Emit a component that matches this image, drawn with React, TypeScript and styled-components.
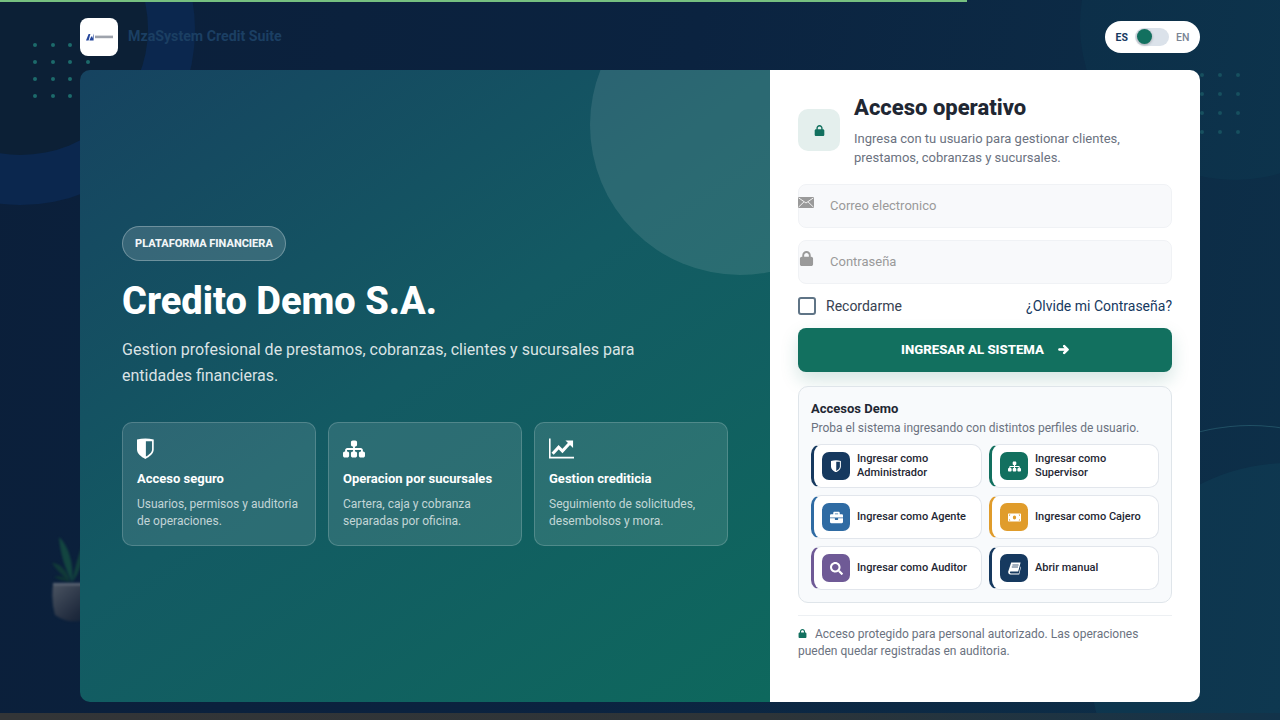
import type { ComponentType } from "react";
import styled, { createGlobalStyle } from "styled-components";
import { FaBriefcase, FaMoneyBill, FaSearch } from "react-icons/fa";
import { FaArrowRight, FaLock, FaSitemap } from "react-icons/fa6";

const GlobalStyle = createGlobalStyle`
  * { box-sizing: border-box; }
  html, body { margin: 0; height: 100%; }
  body {
    font-family: "Roboto", "Liberation Sans", sans-serif;
    background: #0b1f3a;
    overflow: hidden;
  }
`;

const ShieldIcon = () => (
  <svg width="0.76em" height="0.95em" viewBox="0 0 16 20" aria-hidden="true">
    <path
      fill="currentColor"
      fillRule="evenodd"
      d="M0 1.5 Q8 -0.5 16 1.5 V11 C16 15 12 18 8 20 C4 18 0 15 0 11Z M8.5 3 V17.8 C11.5 16 14.2 14 14.4 11 V3Z"
    />
  </svg>
);

const ChartIcon = () => (
  <svg width="1.14em" height="0.95em" viewBox="0 0 25 20" aria-hidden="true">
    <path fill="currentColor" d="M0 0 H1.6 V18.4 H25 V20 H0Z" />
    <path fill="none" stroke="currentColor" strokeWidth="3" d="M3.6 15.4 L9.6 8.8 L13.4 12.6 L21 4.4" />
    <path fill="currentColor" d="M16.4 2 H24 V9.6Z" />
  </svg>
);

const BookIcon = () => (
  <svg width="1em" height="1em" viewBox="0 0 13 13" aria-hidden="true">
    <path
      fill="currentColor"
      d="M3.2 0.5 H12.6 L10.2 9.4 H2.6 C1.6 9.4 1.6 11.4 2.8 11.4 H10.8 L12.6 4.5 L13 5 L11.2 12.5 H2.4 C0.6 12.5 -0.2 10.6 0.4 9Z"
    />
    <path stroke="#16395f" strokeWidth="0.8" d="M4.4 3 H10.6 M3.8 5 H10" />
  </svg>
);

const features: { icon: ComponentType; title: string; lines: string[] }[] = [
  { icon: ShieldIcon, title: "Acceso seguro", lines: ["Usuarios, permisos y auditoria", "de operaciones."] },
  { icon: FaSitemap, title: "Operacion por sucursales", lines: ["Cartera, caja y cobranza", "separadas por oficina."] },
  { icon: ChartIcon, title: "Gestion crediticia", lines: ["Seguimiento de solicitudes,", "desembolsos y mora."] },
];

const demos: { icon: ComponentType; color: string; lines: string[] }[] = [
  { icon: ShieldIcon, color: "#16395f", lines: ["Ingresar como", "Administrador"] },
  { icon: FaSitemap, color: "#12705f", lines: ["Ingresar como", "Supervisor"] },
  { icon: FaBriefcase, color: "#2f6ba3", lines: ["Ingresar como Agente"] },
  { icon: FaMoneyBill, color: "#e09c2b", lines: ["Ingresar como Cajero"] },
  { icon: FaSearch, color: "#6f5a96", lines: ["Ingresar como Auditor"] },
  { icon: BookIcon, color: "#16395f", lines: ["Abrir manual"] },
];

const App = () => {
  return (
    <>
      <GlobalStyle />
      <Page>
        <CircleBlue />
        <CircleDark />
        <CircleRight />
        <CurveRight />
        <SwellRight />
        <DotsLeft>
          {Array.from({ length: 16 }).map((_, i) => (
            <Dot key={i} />
          ))}
        </DotsLeft>
        <DotsRight>
          {Array.from({ length: 16 }).map((_, i) => (
            <Dot key={i} />
          ))}
        </DotsRight>
        <Plant viewBox="0 0 60 90" aria-hidden="true">
          <defs>
            <linearGradient id="pot" x1="0" y1="0" x2="1" y2="1">
              <stop offset="0" stopColor="#4a5361" />
              <stop offset="0.7" stopColor="#1f2a3d" />
              <stop offset="1" stopColor="#0f1f35" />
            </linearGradient>
          </defs>
          <path d="M18 47 C10 40 4 34 0 28 C8 28 16 36 18 47Z" fill="#113a38" />
          <path d="M18 47 C12 46 6 44 2 42 C8 40 14 42 18 47Z" fill="#0f3534" />
          <path d="M20 47 C12 32 8 16 7 2 C16 10 22 28 20 47Z" fill="#134540" />
          <path d="M20 47 C22 36 26 22 30 10 C32 24 28 38 20 47Z" fill="#12403d" />
          <path d="M1 50 H40 V82 Q20 92 3 80 Q-1 66 1 50Z" fill="url(#pot)" />
          <rect x="1" y="48" width="39" height="2.5" fill="#5b6473" />
        </Plant>

        <ProgressBar />

        <Header>
          <Brand>
            <LogoBox>
              <svg width="27" height="8" viewBox="0 0 27 8" aria-hidden="true">
                <path d="M0 7.5 L2.6 1 H4.4 L2.6 7.5Z" fill="#24469c" />
                <path d="M3.4 7.5 L5.4 3 L6.4 5 L7.6 0.5 V7.5Z" fill="#24469c" />
                <rect x="9" y="2.6" width="18" height="2.6" fill="#5d6675" opacity="0.6" />
              </svg>
            </LogoBox>
            <BrandName>MzaSystem Credit Suite</BrandName>
          </Brand>
          <LangPill>
            <LangLabel $active>ES</LangLabel>
            <Track>
              <Knob />
            </Track>
            <LangLabel>EN</LangLabel>
          </LangPill>
        </Header>

        <Shell>
          <Hero>
            <HeroCircle />
            <Badge>PLATAFORMA FINANCIERA</Badge>
            <HeroTitle>Credito Demo S.A.</HeroTitle>
            <HeroText>
              Gestion profesional de prestamos, cobranzas, clientes y sucursales para
              <br />
              entidades financieras.
            </HeroText>
            <FeatureGrid>
              {features.map((f) => (
                <FeatureCard key={f.title}>
                  <FeatureIcon>
                    <f.icon />
                  </FeatureIcon>
                  <FeatureTitle>{f.title}</FeatureTitle>
                  <FeatureText>
                    {f.lines[0]}
                    <br />
                    {f.lines[1]}
                  </FeatureText>
                </FeatureCard>
              ))}
            </FeatureGrid>
          </Hero>

          <LoginPanel>
            <LoginHead>
              <LockBox>
                <FaLock />
              </LockBox>
              <div>
                <LoginTitle>Acceso operativo</LoginTitle>
                <LoginSub>
                  Ingresa con tu usuario para gestionar clientes,
                  <br />
                  prestamos, cobranzas y sucursales.
                </LoginSub>
              </div>
            </LoginHead>

            <Field>
              <FieldIcon $top={13}>
                <svg width="16" height="11" viewBox="0 0 16 11" aria-hidden="true">
                  <rect width="16" height="11" fill="#9a9a9a" />
                  <path d="M0.5 0.8 L8 6 L15.5 0.8 M0.5 10.2 L6 4.8 M15.5 10.2 L10 4.8" stroke="#f0f0f0" strokeWidth="1" fill="none" />
                </svg>
              </FieldIcon>
              <FieldInput placeholder="Correo electronico" />
            </Field>
            <Field>
              <FieldIcon $top={11}>
                <FaLock />
              </FieldIcon>
              <FieldInput placeholder="Contraseña" />
            </Field>

            <OptionsRow>
              <RememberLabel>
                <CheckBox />
                Recordarme
              </RememberLabel>
              <ForgotLink>¿Olvide mi Contraseña?</ForgotLink>
            </OptionsRow>

            <SubmitButton>
              INGRESAR AL SISTEMA
              <FaArrowRight />
            </SubmitButton>

            <DemoCard>
              <DemoTitle>Accesos Demo</DemoTitle>
              <DemoSub>Proba el sistema ingresando con distintos perfiles de usuario.</DemoSub>
              <DemoGrid>
                {demos.map((d) => (
                  <DemoButton key={d.lines.join(" ")} $color={d.color}>
                    <DemoIcon $color={d.color}>
                      <d.icon />
                    </DemoIcon>
                    <span>
                      {d.lines.map((line, i) => (
                        <DemoLine key={i}>{line}</DemoLine>
                      ))}
                    </span>
                  </DemoButton>
                ))}
              </DemoGrid>
            </DemoCard>

            <Notice>
              <NoticeLock>
                <FaLock />
              </NoticeLock>
              Acceso protegido para personal autorizado. Las operaciones
              <br />
              pueden quedar registradas en auditoria.
            </Notice>
          </LoginPanel>
        </Shell>
        <BottomStrip />
      </Page>
    </>
  );
};

export default App;

const Page = styled.div`
  position: relative;
  width: 1280px;
  height: 720px;
  overflow: hidden;
  background: linear-gradient(100deg, #0b1f3a 0%, #0b2340 50%, #0d3049 100%);
  display: flex;
  flex-direction: column;
`;

const ProgressBar = styled.div`
  position: absolute;
  top: 0;
  left: 0;
  width: 967px;
  height: 2px;
  background: #76c080;
`;

const CircleBlue = styled.div`
  position: absolute;
  left: -155px;
  top: -145px;
  width: 350px;
  height: 350px;
  border-radius: 50%;
  background: #0b274e;
`;

const CircleDark = styled.div`
  position: absolute;
  left: -107px;
  top: -97px;
  width: 255px;
  height: 252px;
  border-radius: 50%;
  background: #0c2036;
`;

const CircleRight = styled.div`
  position: absolute;
  right: -110px;
  top: -130px;
  width: 310px;
  height: 310px;
  border-radius: 50%;
  background: rgba(20, 90, 110, 0.12);
`;

const CurveRight = styled.div`
  position: absolute;
  left: 1050px;
  top: 425px;
  width: 400px;
  height: 400px;
  border-radius: 50%;
  border-top: 1px solid rgba(80, 160, 170, 0.3);
`;

const SwellRight = styled.div`
  position: absolute;
  left: 1090px;
  top: 463px;
  width: 400px;
  height: 400px;
  border-radius: 50%;
  background: rgba(20, 90, 110, 0.2);
`;

const DotsGrid = styled.div`
  position: absolute;
  display: grid;
  grid-template-columns: repeat(4, 4px);
  grid-auto-rows: 4px;
`;

const DotsLeft = styled(DotsGrid)`
  left: 33px;
  top: 43px;
  column-gap: 13.5px;
  row-gap: 13px;
  color: #1d6a6b;
`;

const DotsRight = styled(DotsGrid)`
  left: 1182px;
  top: 73px;
  column-gap: 14px;
  row-gap: 15px;
  color: #17505f;
`;

const Dot = styled.span`
  width: 4px;
  height: 4px;
  border-radius: 50%;
  background: currentColor;
`;

const Plant = styled.svg`
  position: absolute;
  left: 52px;
  top: 535px;
  width: 60px;
  height: 90px;
  filter: blur(0.8px);
`;

const Header = styled.header`
  position: relative;
  z-index: 2;
  height: 70px;
  padding: 18px 80px 0;
  display: flex;
  justify-content: space-between;
  align-items: flex-start;
`;

const Brand = styled.div`
  display: flex;
  align-items: center;
  gap: 10px;
`;

const LogoBox = styled.div`
  width: 38px;
  height: 38px;
  border-radius: 8px;
  background: #ffffff;
  display: flex;
  align-items: center;
  justify-content: center;
`;

const BrandName = styled.div`
  margin-bottom: 2px;
  font-size: 14.2px;
  font-weight: 700;
  color: #1b3f63;
`;

const LangPill = styled.div`
  margin-top: 3px;
  width: 95px;
  height: 32px;
  border-radius: 16px;
  background: #ffffff;
  display: flex;
  align-items: center;
  justify-content: center;
  gap: 7px;
`;

const LangLabel = styled.span<{ $active?: boolean }>`
  font-size: 10.5px;
  font-weight: ${(p) => (p.$active ? 700 : 500)};
  color: ${(p) => (p.$active ? "#16395f" : "#7a8594")};
`;

const Track = styled.div`
  position: relative;
  width: 34px;
  height: 18px;
  border-radius: 9px;
  background: #dbe2ea;
`;

const Knob = styled.div`
  position: absolute;
  left: 2px;
  top: 1px;
  width: 15px;
  height: 15px;
  border-radius: 50%;
  background: #12705f;
  box-shadow: 0 1px 3px rgba(0, 0, 0, 0.3);
`;

const Shell = styled.main`
  position: relative;
  z-index: 2;
  margin: 0 80px;
  width: 1120px;
  height: 632px;
  display: grid;
  grid-template-columns: 690px 430px;
  border-radius: 10px;
  overflow: hidden;
`;

const Hero = styled.section`
  position: relative;
  overflow: hidden;
  padding: 156px 42px 0;
  background: linear-gradient(145deg, #164360 0%, #135a63 48%, #0e685d 100%);
  color: #ffffff;
`;

const HeroCircle = styled.div`
  position: absolute;
  left: 510px;
  top: -95px;
  width: 300px;
  height: 300px;
  border-radius: 50%;
  background: rgba(255, 255, 255, 0.1);
`;

const Badge = styled.div`
  display: inline-flex;
  align-items: center;
  height: 35px;
  padding: 0 12px;
  border-radius: 18px;
  border: 1px solid rgba(255, 255, 255, 0.28);
  background: rgba(255, 255, 255, 0.15);
  font-size: 11px;
  font-weight: 800;
  color: #f1f5f7;
`;

const HeroTitle = styled.h1`
  margin: 18px 0 0;
  font-size: 38px;
  line-height: 44px;
  font-weight: 800;
`;

const HeroText = styled.p`
  position: relative;
  margin: 14px 0 0;
  font-size: 16px;
  line-height: 26px;
  color: rgba(255, 255, 255, 0.85);
`;

const FeatureGrid = styled.div`
  position: relative;
  margin-top: 33px;
  display: grid;
  grid-template-columns: repeat(3, 194px);
  gap: 12px;
`;

const FeatureCard = styled.div`
  height: 124px;
  padding: 15px 14px 0;
  border-radius: 10px;
  border: 1px solid rgba(255, 255, 255, 0.18);
  background: rgba(255, 255, 255, 0.11);
`;

const FeatureIcon = styled.div`
  height: 21px;
  font-size: 22px;
  color: #ffffff;
  display: flex;
  svg { display: block; }
`;

const FeatureTitle = styled.div`
  margin-top: 11px;
  font-size: 13px;
  line-height: 18px;
  font-weight: 700;
`;

const FeatureText = styled.div`
  margin-top: 8px;
  font-size: 12px;
  line-height: 17px;
  color: rgba(255, 255, 255, 0.72);
`;

const LoginPanel = styled.section`
  background: #ffffff;
  padding: 26px 28px 0;
`;

const LoginHead = styled.div`
  display: flex;
  align-items: center;
  gap: 14px;
  height: 72px;
  margin-bottom: 16px;
`;

const LockBox = styled.div`
  flex: none;
  width: 42px;
  height: 42px;
  margin-top: -4px;
  border-radius: 10px;
  background: #e4efed;
  color: #12705f;
  font-size: 11px;
  display: flex;
  align-items: center;
  justify-content: center;
`;

const LoginTitle = styled.h2`
  margin: -2px 0 0;
  font-size: 22px;
  line-height: 26px;
  font-weight: 800;
  color: #1f2733;
`;

const LoginSub = styled.p`
  margin: 8px 0 0;
  font-size: 13px;
  line-height: 19px;
  color: #6b7280;
`;

const Field = styled.div`
  position: relative;
  height: 44px;
  margin-bottom: 12px;
`;

const FieldIcon = styled.span<{ $top: number }>`
  position: absolute;
  left: 0;
  top: ${(p) => p.$top}px;
  width: 16px;
  color: #9a9a9a;
  font-size: 15px;
  line-height: 15px;
  text-align: center;
  svg { display: block; margin: 0 auto; }
`;

const FieldInput = styled.input`
  width: 100%;
  height: 100%;
  padding: 0 12px 2px 31px;
  border: 1px solid #f0f2f5;
  border-radius: 8px;
  background: #f8f9fb;
  font-family: inherit;
  font-size: 13px;
  outline: none;
  &::placeholder { color: #9a9a9a; opacity: 1; }
`;

const OptionsRow = styled.div`
  display: flex;
  justify-content: space-between;
  align-items: center;
  height: 32px;
  margin-top: -6px;
`;

const RememberLabel = styled.label`
  display: flex;
  align-items: center;
  gap: 10px;
  font-size: 14px;
  color: #374151;
`;

const CheckBox = styled.span`
  width: 18px;
  height: 18px;
  border: 2px solid #5f7486;
  border-radius: 3px;
  background: #ffffff;
`;

const ForgotLink = styled.a`
  font-size: 14px;
  color: #16395f;
`;

const SubmitButton = styled.button`
  width: 100%;
  height: 44px;
  margin-top: 6px;
  padding-bottom: 3px;
  border: 0;
  border-radius: 8px;
  background: #12705f;
  color: #ffffff;
  font-family: inherit;
  font-size: 13.2px;
  font-weight: 800;
  display: flex;
  align-items: center;
  justify-content: center;
  gap: 14px;
  box-shadow: 0 8px 18px rgba(18, 112, 95, 0.18);
  svg {
    font-size: 11px;
    stroke: currentColor;
    stroke-width: 50;
  }
`;

const DemoCard = styled.div`
  margin-top: 14px;
  height: 217px;
  padding: 14px 12px 0;
  border: 1px solid #dfe5ea;
  border-radius: 10px;
  background: #f8fafc;
`;

const DemoTitle = styled.div`
  font-size: 13px;
  line-height: 16px;
  font-weight: 700;
  color: #1f2733;
`;

const DemoSub = styled.div`
  margin-top: 3px;
  font-size: 12px;
  line-height: 16px;
  color: #6b7280;
`;

const DemoGrid = styled.div`
  margin-top: 8px;
  display: grid;
  grid-template-columns: 171px 170px;
  grid-auto-rows: 44px;
  gap: 7px;
`;

const DemoButton = styled.div<{ $color: string }>`
  display: flex;
  align-items: center;
  gap: 7px;
  padding-left: 8px;
  border: 1px solid #e2e6ec;
  border-left: 3px solid ${(p) => p.$color};
  border-radius: 10px;
  background: #ffffff;
`;

const DemoIcon = styled.span<{ $color: string }>`
  flex: none;
  width: 28px;
  height: 28px;
  border-radius: 7px;
  background: ${(p) => p.$color};
  color: #ffffff;
  font-size: 13px;
  display: flex;
  align-items: center;
  justify-content: center;
`;

const DemoLine = styled.span`
  display: block;
  font-size: 11px;
  line-height: 14px;
  font-weight: 500;
  color: #1f2733;
`;

const Notice = styled.div`
  margin-top: 12px;
  padding-top: 10px;
  border-top: 1px solid #edf0f3;
  font-size: 12px;
  line-height: 17px;
  color: #6b7280;
`;

const NoticeLock = styled.span`
  display: inline-block;
  width: 17px;
  height: 10px;
  line-height: 10px;
  color: #12705f;
  font-size: 9px;
`;

const BottomStrip = styled.div`
  position: absolute;
  left: 0;
  right: 0;
  bottom: 0;
  height: 7px;
  background: linear-gradient(90deg, #333537 0%, #2d3438 60%, #12334a 100%);
  z-index: 1;
`;
